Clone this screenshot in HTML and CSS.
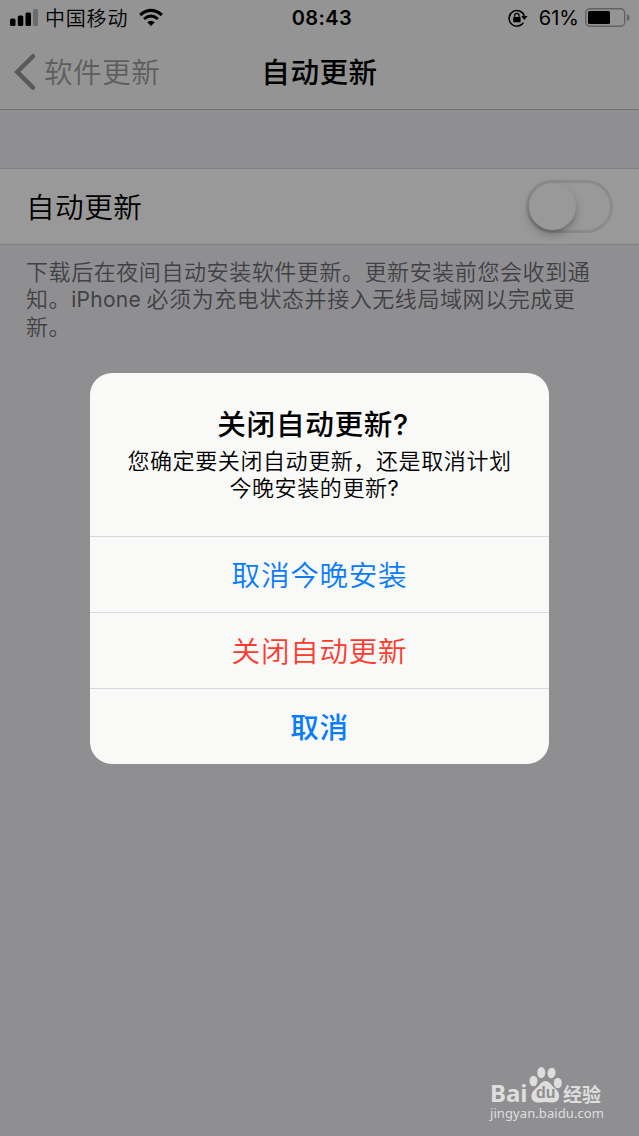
FILE: index.html
```html
<!DOCTYPE html>
<html lang="zh-CN">
<head>
    <meta charset="UTF-8">
    <title>自动更新</title>
    <link rel="stylesheet" href="styles.css">
</head>
<body>

<div class="screen">
    <div class="header">
        <div class="status">
            <div class="status-left">
                <svg class="signal" width="28" height="18" viewBox="0 0 28 18">
                    <rect x="0" y="9.5" width="5.5" height="7.5" rx="1.5"/>
                    <rect x="7.8" y="6.5" width="5.5" height="10.5" rx="1.5"/>
                    <rect x="15.5" y="3.5" width="5.5" height="13.5" rx="1.5"/>
                    <rect x="23" y="0" width="5" height="17" rx="1.5" fill="#6c6c6c"/>
                </svg>
                <span class="carrier">中国移动</span>
                <svg class="wifi" width="24" height="18" viewBox="0 0 24 18">
                    <path d="M1.2 6 Q12 -3.2 22.8 6" fill="none" stroke="#000" stroke-width="3.2"/>
                    <path d="M5 10 Q12 4 19 10" fill="none" stroke="#000" stroke-width="2.8"/>
                    <path d="M8.2 13.2 Q12 10.2 15.8 13.2 L12 17 Z"/>
                </svg>
            </div>
            <div class="time">08:43</div>
            <div class="status-right">
                <svg class="lock" width="20" height="18" viewBox="0 0 20 18">
                    <path d="M15.4 13.6 A7.8 7.8 0 1 1 16.3 7" fill="none" stroke="#000" stroke-width="1.5"/>
                    <path d="M13.2 7 H19.6 L16.4 11 Z"/>
                    <rect x="5.2" y="8" width="7.4" height="5.2" rx=".6"/>
                    <path d="M6.7 8.5 V6.5 A2.2 2.2 0 0 1 11.1 6.5 V8.5" fill="none" stroke="#000" stroke-width="1.2"/>
                </svg>
                <span class="percent">61%</span>
                <svg class="battery" width="45" height="19" viewBox="0 0 45 19">
                    <rect x=".7" y=".7" width="39" height="17.6" rx="4.3" fill="none" stroke="#626262" stroke-width="1.4"/>
                    <rect x="3" y="3" width="22" height="13" rx="1.5"/>
                    <path d="M42 6 Q44.6 7 44.6 9.5 Q44.6 12 42 13 Z" fill="#626262"/>
                </svg>
            </div>
        </div>
        <div class="nav">
            <div class="back">
                <svg width="22" height="36" viewBox="0 0 22 36">
                    <path d="M19 3.2 L3.2 18.9 L19 34.6" fill="none" stroke="#595959" stroke-width="4.4" stroke-linecap="round"/>
                </svg>
                <span>软件更新</span>
            </div>
            <div class="nav-title">自动更新</div>
        </div>
    </div>

    <div class="cell">
        <span>自动更新</span>
        <div class="switch"><div class="knob"></div></div>
    </div>
    <p class="footnote">下载后在夜间自动安装软件更新。更新安装前您会收到通<br>知。<span class="latin">iPhone</span> 必须为充电状态并接入无线局域网以完成更<br>新。</p>
</div>

<div class="alert">
    <div class="alert-text">
        <h1>关闭自动更新<span class="mark">?</span></h1>
        <p>您确定要关闭自动更新，还是取消计划<br>今晚安装的更新<span class="mark">?</span></p>
    </div>
    <div class="button">取消今晚安装</div>
    <div class="button red">关闭自动更新</div>
    <div class="button strong">取消</div>
</div>

<div class="watermark">
    <div class="brand">
        <span class="bai">Bai</span>
        <div class="paw">
            <svg width="33" height="37" viewBox="0 0 33 37">
                <ellipse cx="4.5" cy="14" rx="4" ry="5.3"/>
                <ellipse cx="12.3" cy="5.6" rx="4" ry="5.5"/>
                <ellipse cx="22.5" cy="6" rx="4" ry="5.3" transform="rotate(10 22.5 6)"/>
                <ellipse cx="28.8" cy="16" rx="4" ry="5.2"/>
                <path d="M16.5 14 C20.5 14 22 18 25 20.5 C28 23 30.5 25.5 30 30 C29.4 34.5 26 36 22 35.5 C18 34.8 15 34.8 11 35.5 C6 36 3 34 2.5 30 C2 25.5 5 23 8 20.5 C11 18 12.5 14 16.5 14 Z"/>
            </svg>
            <span class="du">du</span>
        </div>
        <span class="exp">经验</span>
    </div>
    <div class="url">jingyan.baidu.com</div>
</div>

</body>
</html>
```
FILE: styles.css
```css
body {
    margin: 0;
    font-family: Inter, "Noto Sans CJK SC", sans-serif;
    color: #000;
    background: #8f8f91;
    height: 1136px;
    overflow: hidden;
}
svg {
    display: block;
    overflow: visible;
}
.header {
    height: 109px;
    background: #949494;
    border-bottom: 1px solid #717172;
}
.status {
    display: grid;
    grid-template-columns: 1fr auto 1fr;
    align-items: center;
    height: 35px;
    padding: 0 9px 0 10px;
}
.status-left, .status-right {
    display: flex;
    align-items: center;
}
.status-right {
    justify-content: flex-end;
}
.carrier {
    font: 350 20px/34px "Noto Sans CJK SC", sans-serif;
    letter-spacing: .8px;
    margin: 0 11px 0 7px;
}
.time {
    font-size: 20px;
    font-weight: 600;
    letter-spacing: .4px;
    padding-left: 4px;
}
.percent {
    font-size: 20px;
    margin: 0 6px 0 11px;
}
.nav {
    display: grid;
    grid-template-columns: 1fr auto 1fr;
    align-items: center;
    height: 72px;
    font: 350 28.6px/72px "Noto Sans CJK SC", sans-serif;
    letter-spacing: .5px;
}
.back {
    display: flex;
    align-items: center;
    gap: 8px;
    padding-left: 14px;
    color: #5e5e5e;
}
.nav-title {
    font-weight: 500;
}
.cell {
    display: flex;
    align-items: center;
    justify-content: space-between;
    height: 75px;
    margin-top: 58px;
    padding: 0 26px;
    border-top: 1px solid #818183;
    border-bottom: 1px solid #818183;
    background: #999;
    font: 350 28.6px/75px "Noto Sans CJK SC", sans-serif;
    letter-spacing: .5px;
}
.cell span {
    padding-bottom: 2px;
}
.switch {
    box-sizing: border-box;
    width: 87px;
    height: 53px;
    border: 3px solid #8a8a8b;
    border-radius: 27px;
}
.knob {
    width: 47px;
    height: 47px;
    border-radius: 50%;
    background: #999;
    box-shadow: 0 5px 10px rgba(0, 0, 0, .22), 0 3px 2px rgba(0, 0, 0, .08);
}
.footnote {
    margin: 12px 26px;
    color: #414145;
    font: 350 22px/27.3px "Noto Sans CJK SC", sans-serif;
    letter-spacing: .57px;
    white-space: nowrap;
}
.latin {
    font-family: Inter, sans-serif;
    font-size: 21px;
    font-weight: 400;
    line-height: 1;
    letter-spacing: .3px;
}

/* dialog over the dimmed page */
.alert {
    position: absolute;
    left: 90px;
    top: 373px;
    width: 459px;
    height: 391px;
    border-radius: 22px;
    background: #f9f9f8;
    font-family: "Noto Sans CJK SC", sans-serif;
    font-weight: 350;
    text-align: center;
    overflow: hidden;
}
.alert-text {
    box-sizing: border-box;
    height: 163px;
    padding-top: 30px;
}
.alert h1 {
    margin: 0;
    font-size: 28.6px;
    line-height: 40px;
    font-weight: 500;
    letter-spacing: .7px;
}
.alert p {
    margin: 3px 0 0;
    font-size: 22px;
    line-height: 27.4px;
    letter-spacing: .6px;
}
.mark {
    display: inline-block;
    width: 1em;
    font-family: Inter, sans-serif;
    line-height: 1;
    text-align: left;
}
.alert p .mark {
    font-weight: 400;
}
.button {
    box-sizing: border-box;
    height: 76px;
    border-top: 1px solid #d7d8dc;
    color: #087cff;
    font-size: 28.6px;
    line-height: 73px;
    letter-spacing: .7px;
}
.red {
    color: #ff3b30;
}
.strong {
    font-weight: 500;
}

.watermark {
    position: absolute;
    left: 490px;
    top: 1068px;
    width: 116px;
    color: #dededf;
    fill: #dededf;
}
.brand {
    display: flex;
    align-items: flex-end;
    height: 36px;
}
.bai {
    font: bold 24px/22px "Noto Sans", sans-serif;
    width: 39px;
}
.paw {
    position: relative;
}
.du {
    position: absolute;
    left: 7px;
    bottom: 3px;
    color: #8f8f91;
    font: bold 16px/16px "Liberation Sans", sans-serif;
}
.exp {
    font: bold 19px/21px "Noto Sans CJK SC", sans-serif;
    margin-left: 1px;
}
.url {
    font: 13px/18px "Noto Sans", sans-serif;
    letter-spacing: .08px;
}
```
